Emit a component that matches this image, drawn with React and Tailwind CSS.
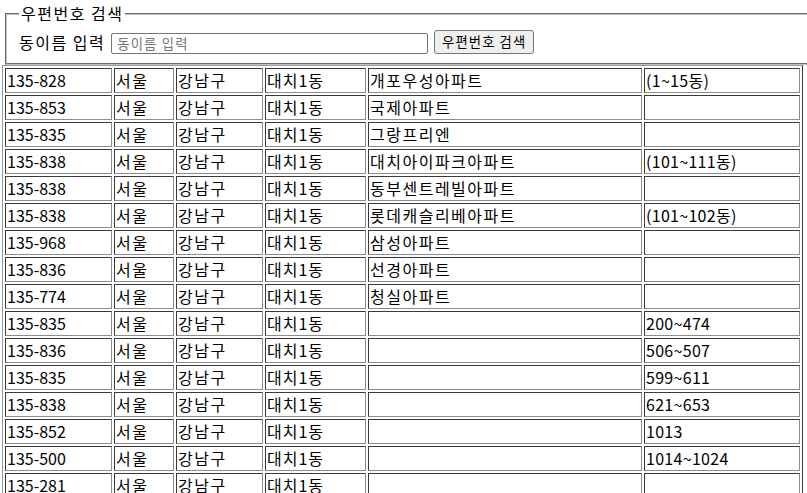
import React from 'react';

// 대치1동 검색 결과
const rows = [
  ['135-828', '개포우성아파트', '(1~15동)'],
  ['135-853', '국제아파트', ''],
  ['135-835', '그랑프리엔', ''],
  ['135-838', '대치아이파크아파트', '(101~111동)'],
  ['135-838', '동부센트레빌아파트', ''],
  ['135-838', '롯데캐슬리베아파트', '(101~102동)'],
  ['135-968', '삼성아파트', ''],
  ['135-836', '선경아파트', ''],
  ['135-774', '청실아파트', ''],
  ['135-835', '', '200~474'],
  ['135-836', '', '506~507'],
  ['135-835', '', '599~611'],
  ['135-838', '', '621~653'],
  ['135-852', '', '1013'],
  ['135-500', '', '1014~1024'],
  ['135-281', '', ''],
];

const widths = ['w-[107px]', 'w-[60px]', 'w-[87px]', 'w-[101px]', 'w-[274px]', 'w-[156px]'];
// 한글 칸만 자간을 넓힘
const spacing = ['', 'tracking-[1.5px]', 'tracking-[1.5px]', 'tracking-[1px]', 'tracking-[1.5px]', 'tracking-[0.3px]'];

const cell =
  'border border-t-[#3a3a3a] border-l-[#3a3a3a] border-r-[#8c8c8c] border-b-[#8c8c8c] p-[1px] h-[25px] text-base leading-[21px] whitespace-nowrap overflow-hidden align-middle';

const App = () => {
  return (
    <div className="w-[807px] h-[493px] overflow-hidden bg-white text-black [font-family:'Noto_Sans_CJK_KR','Noto_Sans',sans-serif]">
      {/* 검색 폼 */}
      <fieldset className="ml-[5px] mt-[3px] w-[840px] [border:2px_groove_#c0c0c0] px-3 pt-[6px] pb-[9px]">
        <legend className="px-[2px] text-base leading-[21px] tracking-[1.5px]">우편번호 검색</legend>
        <div className="flex items-center h-6">
          <label className="text-base leading-[21px] tracking-[1.5px]">동이름 입력</label>
          <input
            type="text"
            placeholder="동이름 입력"
            className="self-end ml-[6px] w-[317px] h-[21px] border border-[#767676] rounded-[2px] px-[5px] text-[13.33px] tracking-[1.2px] leading-none outline-none placeholder:text-[#757575]"
          />
          <button className="ml-[6px] w-[100px] h-6 bg-[#efefef] border border-[#767676] rounded-[3px] text-[13.33px] tracking-[1.1px] leading-none">
            우편번호 검색
          </button>
        </div>
      </fieldset>

      {/* 결과 테이블 */}
      <table className="ml-[2px] w-[801px] table-fixed border-separate border-spacing-[2px] border border-t-[#9a9a9a] border-l-[#9a9a9a] border-r-[#3a3a3a] border-b-[#3a3a3a]">
        <tbody>
          {rows.map((r, i) => {
            const cols = [r[0], '서울', '강남구', '대치1동', r[1], r[2]];
            return (
              <tr key={i}>
                {cols.map((c, j) => (
                  <td key={j} className={`${cell} ${spacing[j]} ${i === 0 ? widths[j] : ''}`}>
                    {c}
                  </td>
                ))}
              </tr>
            );
          })}
        </tbody>
      </table>
    </div>
  );
};

export default App;
